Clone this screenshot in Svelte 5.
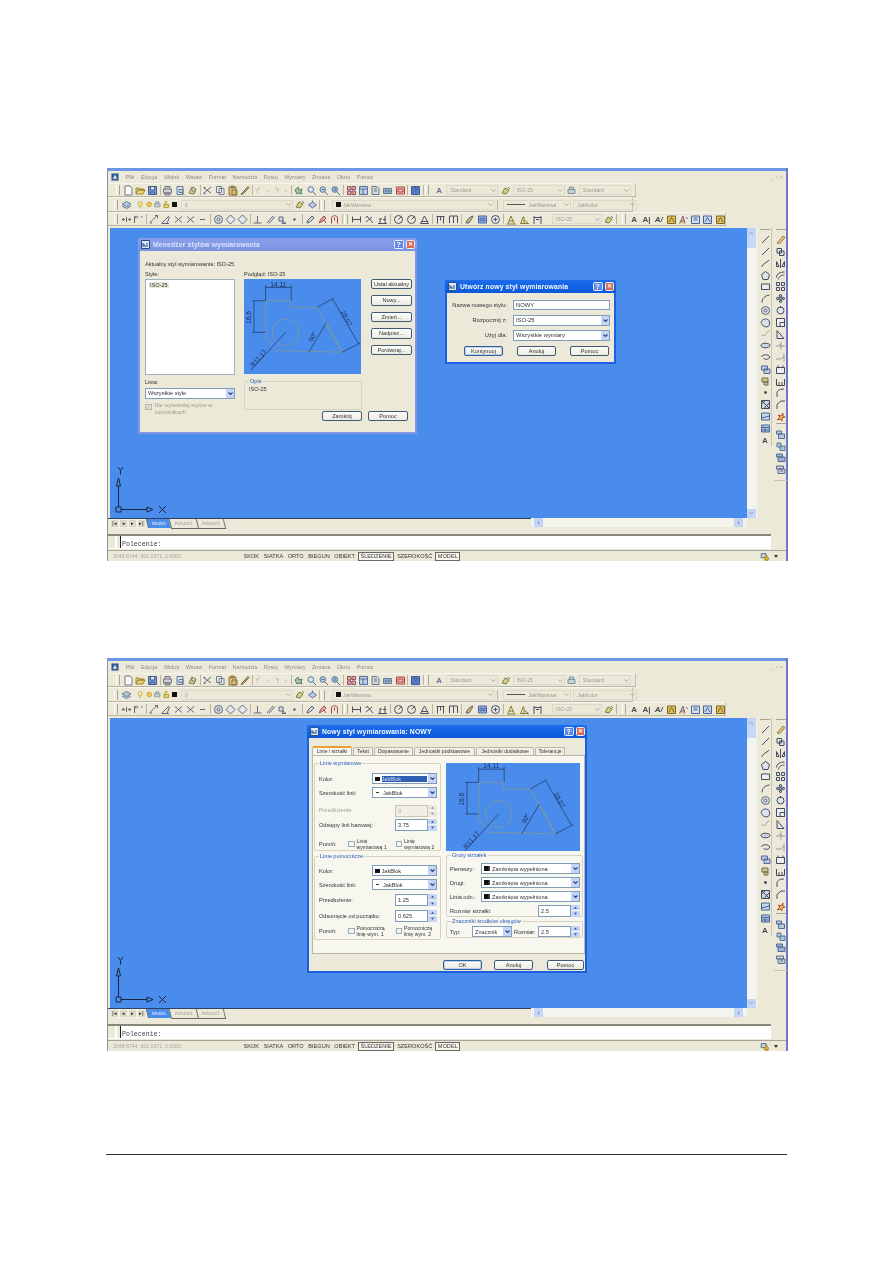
<script>
	// toolbar glyphs on an 11x11 box: [stroke, fill, path]
	const icons = {
		new: ['#55657a', '#fff', 'M2 1h5l2 2v7H2z'],
		open: ['#8a7420', '#f2d060', 'M1 9V3h3l1 1h4v1H3L1 9h7l2-4H3'],
		save: ['#24408c', '#6f8fd8', 'M1.5 1.5h8v8h-8zM3.5 2v3h4V2M3.5 9V7h4v2'],
		print: ['#5a6070', '#c8ccd4', 'M3 4V1.5h5V4M1.5 4h8v4h-8zM3 8h5v2H3z'],
		preview: ['#47608c', '#dfe6f2', 'M2 1.5h6v8H2zM6 6.5l3 3M4 4.5h4v3H4z'],
		plot: ['#6a6240', '#d9cf90', 'M2 8l3-6 4 2-2 5zM5 2v4h3'],
		cut: ['#47506a', 'none', 'M2 8l7-6M2 3l7 5M1.5 8.5h2M1.5 2.5h2'],
		copy: ['#5d6b80', '#eef1f6', 'M1.5 1.5h5v6h-5zM4 3.5h5v6H4z'],
		paste: ['#7a6330', '#e0b860', 'M2 2h7v8H2zM4 1h3v2H4zM5 5h5v5H5z'],
		brush: ['#5a4a30', '#d8a040', 'M9 1.5L5 6 3.5 7.5 2 9.5l2.5-1L6 7l4-4.5z'],
		undo: ['#b8b8ac', 'none', 'M4 9V5c0-2 1.5-3 3.5-3M4 5L2 3.5M4 5l2-1.5'],
		redo: ['#b8b8ac', 'none', 'M7 9V5C7 3 5.5 2 3.5 2M7 5l2-1.5M7 5L5 3.5'],
		dash: ['#b0b0a4', 'none', 'M4 6h3'],
		pan: ['#3e6e50', '#9ac0a0', 'M2 5l3-3 1 3 3-1-1 3 1 2-3-1-2 1z'],
		zoomr: ['#3c5c90', '#d8e4f4', 'M2 4.5a2.8 2.8 0 1 0 5.6 0a2.8 2.8 0 1 0-5.6 0M7 7l3 3'],
		zoomw: ['#3c5c90', '#b8cce8', 'M2 4.5a2.8 2.8 0 1 0 5.6 0a2.8 2.8 0 1 0-5.6 0M7 7l3 3M3.5 4.5h3'],
		zoomp: ['#3c5c90', '#8fb0dc', 'M2 4.5a2.8 2.8 0 1 0 5.6 0a2.8 2.8 0 1 0-5.6 0M7 7l3 3M5 3v3'],
		grid: ['#8a2f70', '#d9b060', 'M1.5 1.5h3.5v3.5H1.5zM6 6h3.5v3.5H6zM6 1.5h3.5v3H6zM1.5 6h3.5v3.5H1.5z'],
		props: ['#3f5c90', '#b8cce4', 'M1.5 1.5h8v8h-8zM1.5 4h8M5 4v5.5'],
		dc: ['#50607a', '#cfd8e4', 'M2 1.5h5l2 2v6H2zM4 4h3M4 6h3'],
		tool: ['#4a6a90', '#9cc0d8', 'M1.5 3.5h8v5h-8zM1.5 6h8M4 3.5v5M7 3.5v5'],
		calc: ['#b02020', '#e8c0c0', 'M1.5 2h8v7h-8zM3 4h5v3H3z'],
		help: ['#24408c', '#3c68c0', 'M1.5 1.5h8v8h-8zM4 4c0-1.5 3-1.5 3 0c0 1-1.5 1-1.5 2.5'],
		layers: ['#54708c', '#b0c4dc', 'M1 5l4.5-2.5L10 5 5.5 7.5zM1 7l4.5 2.5L10 7'],
		bulb: ['#a89010', '#fff080', 'M3 4.5a2.5 2.5 0 1 1 5 0c0 1.5-1 2-1.2 3H4.2C4 6.5 3 6 3 4.5zM4.5 9.5h2'],
		sun: ['#b08810', '#f0c838', 'M2.5 5.5a3 3 0 1 0 6 0a3 3 0 1 0-6 0'],
		print2: ['#6a8090', '#c0d0c8', 'M2 4.5h7v4H2zM3.5 4.5V2h4v2.5'],
		lock: ['#908010', '#e8d040', 'M2.5 5.5h6v4h-6zM4 5.5V3c0-2 3-2 3 0'],
		lprev: ['#5a6a3c', '#e0c860', 'M2 8l3-5 4 2-3 4zM8 2l2 2'],
		lstate: ['#4a5ea0', '#b8c4e8', 'M1.5 6l4-3 4 3-4 3zM5.5 1.5v2'],
		dline: ['#46506a', 'none', 'M1 5.5h3M7 5.5h3M2.5 4l-1 1.5 1 1.5M8.5 4l1 1.5-1 1.5M5.5 3v5'],
		dali: ['#46506a', 'none', 'M1.5 9V3h4M3 4.5l-1.5-1.5L3 1.5M8 2l1.5 1.5'],
		darc: ['#46506a', 'none', 'M1.5 9L5 5.5M2 9h2M5 5.5l4-4M7 1.5h2.5V4'],
		dang: ['#46506a', 'none', 'M1.5 9.5L9 2M7 9.5L9.5 3M2 9.5h7'],
		dx: ['#46506a', 'none', 'M2 2.5l7 6M9 2.5l-7 6'],
		dsm: ['#46506a', 'none', 'M3 5.5h5'],
		circ: ['#46506a', '#d8e0ec', 'M1.5 5.5a4 4 0 1 0 8 0a4 4 0 1 0-8 0M4 5.5a1.5 1.5 0 1 0 3 0a1.5 1.5 0 1 0-3 0'],
		snap: ['#46506a', '#e4e8f0', 'M5.5 1l4.5 4.5-4.5 4.5L1 5.5z'],
		perp: ['#46506a', 'none', 'M1.5 9h8M5.5 9V2'],
		slant: ['#46506a', 'none', 'M2 9l6-7M4 9.5l6-7'],
		box3: ['#46506a', '#d8e0ec', 'M2 3h4v4H2zM6 7l3 2.5H5z'],
		dot: ['#46506a', '#46506a', 'M4.8 4.8h1.4v1.4H4.8z'],
		pen: ['#46506a', '#c8d0dc', 'M2 9l1-3 4-4 2 2-4 4z'],
		red: ['#a03030', '#e0a0a0', 'M2 9l2-4 3-3 2 2-3 3zM7 6l2 3'],
		arch: ['#a02020', 'none', 'M2.5 9.5V4c0-3 6-3 6 0v5.5M5.5 3.5v3'],
		hdim: ['#30364a', 'none', 'M1.5 2.5v6M9.5 2.5v6M1.5 5.5h8'],
		vdim: ['#30364a', 'none', 'M2 8l6-5M3 2l6 7M1.5 4l2-2'],
		odim: ['#30364a', 'none', 'M1 9.5h9M3 9.5V4M8 9.5V2M3 5h2M6 5.5h3'],
		crc: ['#30364a', 'none', 'M1.5 5.5a4 4 0 1 0 8 0a4 4 0 1 0-8 0M5.5 5.5l3-3'],
		tri: ['#30364a', 'none', 'M1.5 9.5h8L5.5 2zM3 7.5h5'],
		hline: ['#30364a', 'none', 'M1.5 2.5h8M2.5 2.5v7M8.5 2.5v7M5.5 2.5v4'],
		mdim: ['#30364a', 'none', 'M1.5 2h8M1.5 2v7M5.5 2v7M9.5 2v7'],
		tol: ['#3c4a70', '#d4b040', 'M2 9c1-4 4-6 7-7-1 3-3 5-4 7z'],
		b20: ['#284ca0', '#9cb8e4', 'M1.5 2h8v7h-8zM3 4h2v3H3zM6 4h2v3H6z'],
		dcen: ['#30364a', '#e8ecf2', 'M1.5 5.5a4 4 0 1 0 8 0a4 4 0 1 0-8 0M3.5 5.5h4M5.5 3.5v4'],
		dtxt: ['#7a6a10', 'none', 'M2 9.5L5 2l3 7.5M3 7h5M1 10h9'],
		dstyle: ['#7a6a10', 'none', 'M2 9l2-6h1v6M5 6l4 3M1 9.5h9'],
		dupd: ['#30364a', 'none', 'M2 2v8M9 2v8M2 3.5h7M4 5.5h3'],
		line: ['#28304a', 'none', 'M2 9l7-7'],
		spl: ['#28304a', 'none', 'M2 9c0-3 2-2 3-4 1-1 3-1 4-3'],
		hex: ['#28304a', '#dde4ee', 'M5.5 1.5l4 3-1.5 5H3l-1.5-5z'],
		rect: ['#28304a', '#eef1f6', 'M1.5 3h8v5.5h-8z'],
		arc: ['#28304a', 'none', 'M2 9.5c0-4 3-7 7.5-7.5'],
		cloud: ['#28304a', '#d8dff0', 'M2 3.5c2-2 5-2 7 0 1 2 1 5-1 6-2 1-5 0-6-2-1-1-1-3 0-4z'],
		wave: ['#8a8f90', 'none', 'M1.5 7c2-3 3 1 4-1s2-4 4-4'],
		ell: ['#28304a', '#c8d2e2', 'M1 5.5c0-3 9-3 9 0s-9 3-9 0z'],
		ell2: ['#28304a', 'none', 'M1.5 5c0-3 8-3 8 0s-5 2.5-6 1.5'],
		block: ['#345090', '#b8c8e0', 'M1.5 2h6v4h-6zM4 5h6v4.5H4z'],
		ins: ['#5a5a38', '#c8c080', 'M2 2h6v4H2zM4 6h4v3H4z'],
		point: ['#28304a', '#28304a', 'M4.7 4.7h1.6v1.6H4.7z'],
		hatch: ['#28304a', '#c8d2e2', 'M1.5 1.5h8v8h-8zM1.5 5l4-3.5M4 9.5l5.5-6M1.5 1.5l8 8'],
		grad: ['#2c508c', '#c0d4e8', 'M1.5 2h8v7h-8zM1.5 7l8-2'],
		table: ['#2c508c', '#a8c4e4', 'M1.5 2h8v7h-8zM1.5 4.5h8M1.5 7h8M5 4.5V9'],
		erase: ['#8a7040', '#e0c060', 'M2 9l6-7 2 1.5L5 9.5z'],
		cpy2: ['#28304a', '#e4e8f0', 'M2 2.5h4.5v4.5H2zM4.5 5h4.5v4.5H4.5z'],
		mir: ['#28304a', 'none', 'M5.5 1v9M1.5 8.5V3.5L4 8.5zM9.5 8.5V3.5L7 8.5z'],
		off: ['#28304a', 'none', 'M1.5 7.5c0-4 4-5.5 8-5.5M3.5 9.5c0-3 3-4.5 6-4.5'],
		arr: ['#28304a', '#e4e8f0', 'M1.5 1.5h3v3h-3zM6.5 1.5h3v3h-3zM1.5 6.5h3v3h-3zM6.5 6.5h3v3h-3z'],
		move: ['#28304a', '#b8c8dc', 'M5.5 1l1.5 2H6v2h2V4l2 1.5L8 7V6H6v2h1L5.5 10 4 8h1V6H3v1L1 5.5 3 4v1h2V3H4z'],
		rot: ['#28304a', '#dde4ee', 'M2 5.5a3.5 3.5 0 1 0 7 0a3.5 3.5 0 1 0-7 0M5.5 1v2'],
		scale: ['#28304a', '#eef1f6', 'M1.5 1.5h8v8h-8zM5 5.5h4.5v4H5z'],
		stretch: ['#28304a', '#dde4ee', 'M2 9.5V1.5l7 8z'],
		trim: ['#8a8f90', 'none', 'M1 6h9M6 1.5v8M4 4l2 2'],
		ext: ['#8a8f90', 'none', 'M1 7h5l3-3M9 1.5v8'],
		brk: ['#28304a', '#eef1f6', 'M1.5 3.5h8v6h-8zM3 3.5v-2M8 3.5v-2'],
		brk2: ['#28304a', 'none', 'M1.5 3v6.5h8V3M4 9.5V6M7 9.5V6'],
		fil: ['#28304a', 'none', 'M2 10V6c0-2 2-4 7-4'],
		cham: ['#28304a', 'none', 'M2 10V5.5L6 2h4'],
		expl: ['#b03020', '#e8c030', 'M2 9l3-3-2-2 3 1 2-3 0 3 2 1-3 1 0 3-2-2z'],
		d1: ['#3a5890', '#b0c4dc', 'M1.5 2h5v3h-5zM3.5 5h6v4.5h-6z'],
		d2: ['#3a6890', '#a0c0dc', 'M2 2h4v4H2zM5 5h5v4.5H5z'],
		d3: ['#3a5890', '#8ea8cc', 'M1.5 2h6v3h-6zM3 5h7v4.5H3z'],
		d4: ['#46587a', '#c0ccdc', 'M1.5 2h7v3h-7zM3 5h7v4.5H3zM5 7h3'],
		astyle: ['#6a4c90', '#e0c060', 'M1.5 9.5L5 2l2 7.5M3 7h4M8 3l2 2'],
		ab: ['#2a4a90', '#c8d8f0', 'M1.5 2h8v7.5h-8zM3 8l2.5-4.5L8 8'],
		ab2: ['#2a4a90', '#d8e4f4', 'M1.5 2h8v7.5h-8zM3.5 4h4M3.5 6h4'],
		afind: ['#6a5010', '#dcb840', 'M1.5 2h8v7.5h-8zM3 8l2.5-4.5L8 8']
	};

	const letters = { A: 'A', AI: 'A|', AN: 'A/' };
	const narrow = ['undo', 'redo', 'dash'];

	const left = ['line', 'line', 'spl', 'hex', 'rect', 'arc', 'circ', 'cloud', 'wave', 'ell', 'ell2', 'block', 'ins', 'point', 'hatch', 'grad', 'table', 'A'];
	const right = ['erase', 'cpy2', 'mir', 'off', 'arr', 'move', 'rot', 'scale', 'stretch', 'trim', 'ext', 'brk', 'brk2', 'fil', 'cham', 'expl'];
	const draw = ['d1', 'd2', 'd3', 'd4'];

	const row1 = ['new', 'open', 'save', '|', 'print', 'preview', 'plot', '|', 'cut', 'copy', 'paste', 'brush', '|', 'undo', 'dash', 'redo', 'dash', '|', 'pan', 'zoomr', 'zoomw', 'zoomp', '|', 'grid', 'props', 'dc', 'tool', 'calc', '|', 'help'];
	const row3a = ['dline', 'dali', '|', 'darc', 'dang', 'dx', 'dx', 'dsm', '|', 'circ', 'snap', 'snap', '|', 'perp', 'slant', 'box3', 'dot', '|', 'pen', 'red', 'arch'];
	const row3b = ['hdim', 'vdim', 'odim', '|', 'crc', 'crc', 'tri', '|', 'hline', 'mdim', '|', 'tol', 'b20', 'dcen', '|', 'dtxt', 'dstyle', 'dupd'];
	const row3c = ['A', 'AI', 'AN', 'afind', 'astyle', 'ab2', 'ab', 'afind'];

	const tabs3 = ['Linie i strzałki', 'Tekst', 'Dopasowanie', 'Jednostki podstawowe', 'Jednostki dodatkowe', 'Tolerancje'];
	const menu = ['Plik', 'Edycja', 'Widok', 'Wstaw', 'Format', 'Narzędzia', 'Rysuj', 'Wymiary', 'Zmiana', 'Okno', 'Pomoc'];
	const status = ['SKOK', 'SIATKA', 'ORTO', 'BIEGUN', 'OBIEKT', 'ŚLEDZENIE', 'SZEROKOŚĆ', 'MODEL'];
</script>

{#snippet ic(name)}
	{#if name === '|'}
		<i class="sep"></i>
	{:else if letters[name]}
		<b class="tool ltr" class:ital={name === 'AN'}>{letters[name]}</b>
	{:else}
		<svg class="tool" class:nar={narrow.includes(name)} viewBox="0 0 11 11" width="11" height="11">
			<path d={icons[name][2]} stroke={icons[name][0]} fill={icons[name][1]} stroke-width="1" />
		</svg>
	{/if}
{/snippet}

{#snippet combo(text, cls, swatch = false, lineMark = false)}
	<span class="combo {cls}">
		{#if swatch}<i class="blk"></i>{/if}
		{#if lineMark}<i class="lmark"></i>{/if}
		<span class="ctext">{text}</span>
		<svg class="cv" viewBox="0 0 7 7" width="7" height="7"><path d="M1.5 2.5l2 2 2-2" fill="none" stroke="#a8a89c" /></svg>
	</span>
{/snippet}

{#snippet sel(text, cls = '', swatch = '')}
	<span class="sel {cls}">
		{#if swatch === 'b'}<i class="blk"></i>{/if}
		{#if swatch === 'l'}<i class="lmark2"></i>{/if}
		{#if swatch === 'a'}<i class="arrow"></i>{/if}
		<span class="stext" class:picked={cls.includes('picked')}>{text}</span>
		<span class="sbtn"><svg viewBox="0 0 7 7" width="7" height="7"><path d="M1.5 2.5l2 2 2-2" fill="none" stroke="#2a4a90" stroke-width="1.2" /></svg></span>
	</span>
{/snippet}

{#snippet spin(text, cls = '')}
	<span class="spin {cls}">
		<span class="sval">{text}</span>
		<span class="sarr">
			<svg viewBox="0 0 9 5" preserveAspectRatio="none"><path d="M3 3.500l1.500-2 1.500 2z" fill="#2a4a90" /></svg>
			<svg viewBox="0 0 9 5" preserveAspectRatio="none"><path d="M3 1.500l1.500 2 1.500-2z" fill="#2a4a90" /></svg>
		</span>
	</span>
{/snippet}

{#snippet preview(vb, cls)}
	<svg class="preview {cls}" viewBox={vb}>
		<g fill="none" stroke="#8f9a80" stroke-width="2">
			<path d="M65 65h75v20h80l75 135-200-5-30-40z" />
			<circle cx="125" cy="160" r="40" />
			<path d="M248 130l47 90" />
		</g>
		<g fill="none" stroke="#1c2f58" stroke-width="2">
			<path d="M65 65V18M142 65V18M65 25h77" />
			<path d="M25 65h40M25 160h40M30 65v95" />
			<path d="M220 85l50-28M295 220l55-28M267 60l78 135" />
			<path d="M195 220l53-90M125 160L20 275" />
		</g>
		<g fill="#1c2f58" font-family="'Liberation Sans', sans-serif" font-size="20">
			<text x="79" y="23">14,11</text>
			<text transform="translate(20 135) rotate(-90)">16,6</text>
			<text transform="translate(290 100) rotate(60)">28,07</text>
			<text transform="translate(205 190) rotate(-60)">60°</text>
			<text transform="translate(28 266) rotate(-48)">R11,17</text>
		</g>
	</svg>
{/snippet}

{#snippet title(text, active)}
	<div class="title" class:active>
		<svg class="ticon" viewBox="0 0 9 9" width="9" height="9"><path d="M.5.5h8v8h-8z" fill="#dfe8f4" stroke="#24508c" /><path d="M2 7V3M2 5h2v2M6 3v4" stroke="#24508c" fill="none" /></svg>
		<span class="ttext">{text}</span>
		<span class="tb help">?</span>
		<span class="tb close">✕</span>
	</div>
{/snippet}

{#snippet managerDialog()}
	<div class="dlg inactive d1">
		{@render title('Menedżer stylów wymiarowania', false)}
		<div class="d1-body">
			<div class="d1-top">Aktualny styl wymiarowania: ISO-25</div>
			<div class="d1-grid">
				<div class="d1-col">
					<span class="lbl">Style:</span>
					<div class="listbox"><span class="item">ISO-25</span></div>
					<span class="lbl lista">Lista:</span>
					{@render sel('Wszystkie style', 'd1-sel')}
					<div class="chk-row">
						<i class="chk on"></i>
						<span class="dim">Nie wyświetlaj stylów w odnośnikach</span>
					</div>
				</div>
				<div class="d1-col mid">
					<span class="lbl">Podgląd: ISO-25</span>
					{@render preview('0 0 352 285', 'p1')}
					<div class="group opis"><span class="legend">Opis</span><span class="lbl">ISO-25</span></div>
				</div>
				<div class="d1-btns">
					<span class="btn w41">Ustal aktualny</span>
					<span class="btn w41">Nowy...</span>
					<span class="btn w41">Zmień...</span>
					<span class="btn w41">Nadpisz...</span>
					<span class="btn w41">Porównaj...</span>
				</div>
			</div>
			<div class="d1-foot">
				<span class="btn w40">Zamknij</span>
				<span class="btn w40">Pomoc</span>
			</div>
		</div>
	</div>
{/snippet}

{#snippet newDialog()}
	<div class="dlg d2">
		{@render title('Utwórz nowy styl wymiarowania', true)}
		<div class="d2-body">
			<div class="d2-row"><span class="rlbl">Nazwa nowego stylu:</span><span class="txt">NOWY</span></div>
			<div class="d2-row"><span class="rlbl">Rozpocznij z:</span>{@render sel('ISO-25', 'd2-sel')}</div>
			<div class="d2-row"><span class="rlbl">Użyj dla:</span>{@render sel('Wszystkie wymiary', 'd2-sel')}</div>
			<div class="d2-btns">
				<span class="btn w39 def">Kontynuuj</span>
				<span class="btn w39">Anuluj</span>
				<span class="btn w39">Pomoc</span>
			</div>
		</div>
	</div>
{/snippet}

{#snippet styleDialog()}
	<div class="dlg d3">
		{@render title('Nowy styl wymiarowania: NOWY', true)}
		<div class="d3-body">
			<div class="tabs">
				{#each tabs3 as t, i}
					<span class="tab t{i}" class:on={i === 0}>{t}</span>
				{/each}
			</div>
			<div class="panel">
				<div class="pcol">
					<div class="group g1">
						<span class="legend">Linie wymiarowe</span>
						<div class="frow"><span class="flbl">Kolor:</span>{@render sel('JakBlok', 'fsel picked', 'b')}</div>
						<div class="frow"><span class="flbl">Szerokość linii:</span>{@render sel('JakBlok', 'fsel', 'l')}</div>
						<div class="frow mt"><span class="flbl dim">Przedłużenie:</span>{@render spin('0', 'off')}</div>
						<div class="frow"><span class="flbl">Odstępy linii bazowej:</span>{@render spin('3.75')}</div>
						<div class="frow mt tall">
							<span class="omit">Pomiń:</span>
							<i class="chk"></i><span class="clbl">Linię wymiarową 1</span>
							<i class="chk"></i><span class="clbl">Linię wymiarową 2</span>
						</div>
					</div>
					<div class="group g2">
						<span class="legend">Linie pomocnicze</span>
						<div class="frow"><span class="flbl">Kolor:</span>{@render sel('JakBlok', 'fsel', 'b')}</div>
						<div class="frow"><span class="flbl">Szerokość linii:</span>{@render sel('JakBlok', 'fsel', 'l')}</div>
						<div class="frow mt1"><span class="flbl">Przedłużenie:</span>{@render spin('1.25')}</div>
						<div class="frow mt1"><span class="flbl">Odsunięcie od początku:</span>{@render spin('0.625')}</div>
						<div class="frow tall">
							<span class="omit">Pomiń:</span>
							<i class="chk"></i><span class="clbl">Pomocniczą linię wym. 1</span>
							<i class="chk"></i><span class="clbl">Pomocniczą linię wym. 2</span>
						</div>
					</div>
				</div>
				<div class="pcol">
					{@render preview('-33 7 403 264', 'p3')}
					<div class="group g3">
						<span class="legend">Groty strzałek</span>
						<div class="frow"><span class="flbl">Pierwszy:</span>{@render sel('Zamknięta wypełniona', 'asel', 'a')}</div>
						<div class="frow"><span class="flbl">Drugi:</span>{@render sel('Zamknięta wypełniona', 'asel', 'a')}</div>
						<div class="frow"><span class="flbl">Linia odn.:</span>{@render sel('Zamknięta wypełniona', 'asel', 'a')}</div>
						<div class="frow"><span class="flbl">Rozmiar strzałki:</span>{@render spin('2.5')}</div>
					</div>
					<div class="group g4">
						<span class="legend">Znaczniki środków okręgów</span>
						<div class="frow">
							<span class="typ">Typ:</span>
							{@render sel('Znacznik', 'tsel')}
							<span class="roz">Rozmiar:</span>
							{@render spin('2.5')}
						</div>
					</div>
				</div>
			</div>
			<div class="d3-foot">
				<span class="btn w39 def">OK</span>
				<span class="btn w39">Anuluj</span>
				<span class="btn w37">Pomoc</span>
			</div>
		</div>
	</div>
{/snippet}

{#snippet cad(dialogs)}
	<section class="cad">
		<div class="bluebar"></div>
		<div class="menubar">
			<svg class="ticon" viewBox="0 0 9 9" width="8" height="8"><path d="M.5.5h8v8h-8z" fill="#2c5a94" /><path d="M2 6.5L4.5 2 7 6.5z" fill="#dfe8f4" /></svg>
			{#each menu as m}<span>{m}</span>{/each}
			<span class="winbtns">_ ▫ ×</span>
		</div>
		<div class="tbrow r1">
			<i class="grip"></i>
			{#each row1 as n}{@render ic(n)}{/each}
			<i class="sep"></i><i class="grip"></i>
			<b class="tool ltr sm">A</b>
			{@render combo('Standard', 'w52')}
			{@render ic('lprev')}
			{@render combo('ISO-25', 'w52')}
			{@render ic('print2')}
			{@render combo('Standard', 'w52')}
		</div>
		<div class="tbrow r2">
			<i class="grip"></i>
			{@render ic('layers')}
			<span class="lay"></span>
			<span class="tight">{@render ic('bulb')}{@render ic('sun')}{@render ic('print2')}{@render ic('lock')}</span>
			<i class="blk big"></i>
			{@render combo('0', 'w112')}
			{@render ic('lprev')}{@render ic('lstate')}
			<i class="sep"></i><i class="grip"></i>
			{@render combo('JakWarstwa', 'w163', true)}
			<i class="sep"></i>
			{@render combo('JakWarstwa', 'w68', false, true)}
			{@render combo('JakKolor', 'w64')}
		</div>
		<div class="tbrow r3">
			<i class="grip"></i>
			{#each row3a as n}{@render ic(n)}{/each}
			<i class="sep"></i><i class="grip"></i>
			<span class="wide">{#each row3b as n}{@render ic(n)}{/each}</span>
			{@render combo('ISO-25', 'w50')}
			{@render ic('lprev')}
			<i class="sep"></i><i class="grip gap"></i>
			{#each row3c as n}{@render ic(n)}{/each}
		</div>
		<div class="work">
			<div class="canvas">
				{@render dialogs()}
				<svg class="ucs" viewBox="0 0 60 50" width="60" height="50">
					<g fill="none" stroke="#1a2440" stroke-width="1">
						<path d="M8 1l2.5 3.5v4M13 1l-2.500 3.500" />
						<path d="M8.500 12l-2 8h4zM8.500 20v21" />
						<path d="M6 41h5v5H6zM11 43.500h26M37 41v5l6-2.500z" />
						<path d="M49 40l7 7M56 40l-7 7" />
					</g>
				</svg>
			</div>
			<div class="vscroll">
				<span class="sb">︿</span><span class="thumb"></span><span class="track"></span><span class="sb">﹀</span>
			</div>
			<div class="vtool c1">
				<i class="hgrip"></i>
				{#each left as n}{@render ic(n)}{/each}
			</div>
			<div class="vtool c2">
				<i class="hgrip"></i>
				{#each right as n}{@render ic(n)}{/each}
				<i class="hgrip"></i>
				{#each draw as n}{@render ic(n)}{/each}
			</div>
		</div>
		<div class="tabbar">
			<div class="navs"><span>|◂</span><span>◂</span><span>▸</span><span>▸|</span></div>
			<span class="stab on">Model</span>
			<span class="stab">Arkusz1</span>
			<span class="stab">Arkusz2</span>
			<div class="hscroll"><span class="sb">‹</span><span class="track"></span><span class="sb">›</span></div>
		</div>
		<div class="cmd"><i class="cgrip"></i><span>Polecenie:</span></div>
		<div class="statusbar">
			<span class="coords">2048.6744, 931.0371, 0.0000</span>
			{#each status as s}
				<span class="stat" class:press={s === 'ŚLEDZENIE' || s === 'MODEL'}>{s}</span>
			{/each}
			<span class="tray">
				<svg viewBox="0 0 11 11" width="9" height="9"><path d="M1.500 2h6v5h-6z" fill="#c8d0dc" stroke="#4a5a70" /><path d="M6 7l2-3 2 3v3H6z" fill="#e8c030" stroke="#8a7010" /></svg>
				<span class="tri-d"></span>
			</span>
		</div>
	</section>
{/snippet}

{#snippet first()}
	{@render managerDialog()}
	{@render newDialog()}
{/snippet}
{#snippet second()}
	{@render styleDialog()}
{/snippet}

<main class="page">
	{@render cad(first)}
	{@render cad(second)}
	<hr class="rule" />
</main>

<style>
	:global(body) {
		background: #fff;
	}

	.page {
		width: 893px;
		height: 1263px;
		padding: 168px 0 0 107px;
		box-sizing: border-box;
		overflow: hidden;
		font-family: 'Liberation Sans', Arial, sans-serif;
	}

	.rule {
		width: 681px;
		margin: 103px 0 0 -1px;
		border: 0;
		border-top: 1px solid #333;
	}

	.cad {
		width: 681px;
		height: 393px;
		margin-bottom: 97px;
		display: flex;
		flex-direction: column;
		background: #ece9d8;
		border-right: 2px solid #6f78c4;
		border-left: 1px solid #8f93a8;
		box-sizing: border-box;
		filter: blur(0.45px);
		font-size: 5.6px;
		color: #222;
	}

	.bluebar {
		height: 3px;
		background: #6d95e8;
	}

	.menubar {
		height: 12px;
		display: flex;
		align-items: center;
		gap: 6.5px;
		padding-left: 3px;
		color: #8c8c80;
		font-size: 5.5px;
		background: #ece9d8;
	}

	.winbtns {
		margin-left: auto;
		margin-right: 3px;
		color: #b5b5aa;
		font-size: 6px;
	}

	.tbrow {
		height: 14.5px;
		display: flex;
		align-items: center;
		padding-left: 6px;
		box-sizing: border-box;
		border-bottom: 1px solid #b8b5a2;
		border-right: 1px solid #c4c1ae;
		border-top: 1px solid #f7f6ee;
	}

	.r1 {
		width: 528px;
		padding-left: 8px;
	}

	.r2 {
		width: 525px;
	}

	.r3 {
		width: 618px;
	}

	.grip {
		width: 2px;
		height: 10px;
		border-left: 1px solid #fff;
		border-right: 1px solid #a8a594;
		margin-right: 2px;
		flex: none;
	}

	.gap {
		margin-left: 4px;
	}

	.sep {
		width: 1px;
		height: 10px;
		background: #b8b5a2;
		margin: 0 1px;
		flex: none;
	}

	.tool {
		flex: none;
		width: 11px;
		height: 11px;
		margin: 0 0.65px;
		opacity: 0.85;
	}

	.nar {
		width: 9px;
		margin: 0;
	}

	.wide,
	.tight {
		display: flex;
		align-items: center;
		flex: none;
	}

	.wide {
		margin-right: 7px;
	}

	.wide .tool {
		margin: 0 1px;
	}

	.tight .tool {
		width: 8.5px;
		margin: 0;
	}

	.ltr {
		display: block;
		text-align: center;
		line-height: 11px;
		font-size: 8px;
		color: #2b2f3a;
		white-space: nowrap;
	}

	.ital {
		font-style: italic;
	}

	.sm {
		color: #6a4c90;
		margin-left: 3px;
	}

	.lay {
		width: 4px;
		flex: none;
	}

	.combo {
		height: 10px;
		display: flex;
		align-items: center;
		flex: none;
		box-sizing: border-box;
		padding-left: 3px;
		margin: 0 1px;
		color: #9c9c90;
		font-size: 5.2px;
		border: 1px solid #dcd9c8;
	}

	.ctext {
		flex: 1;
		white-space: nowrap;
		overflow: hidden;
	}

	.cv {
		flex: none;
	}

	.w52 {
		width: 52px;
	}

	.w112 {
		width: 112px;
	}

	.w163 {
		width: 163px;
		margin-left: 5px;
	}

	.w68 {
		width: 68px;
		margin-left: 4px;
	}

	.w64 {
		width: 64px;
	}

	.w50 {
		width: 50px;
	}

	.blk {
		width: 4.5px;
		height: 4.5px;
		background: #111;
		flex: none;
		margin-right: 2px;
	}

	.big {
		margin-left: 2px;
		margin-right: 3px;
	}

	.lmark {
		width: 18px;
		height: 1px;
		background: #555;
		margin-right: 3px;
		flex: none;
	}

	.work {
		height: 291px;
		margin-top: 1.5px;
		display: flex;
		align-items: stretch;
		padding-left: 2px;
	}

	.canvas {
		width: 637px;
		flex: none;
		position: relative;
		background: #4a8ceb;
	}

	.ucs {
		position: absolute;
		left: 0;
		top: 238px;
	}

	.vscroll {
		width: 10px;
		flex: none;
		background: #f4f4ee;
		display: flex;
		flex-direction: column;
	}

	.vscroll .sb,
	.hscroll .sb {
		display: block;
		background: #c4d4f5;
		color: #23408a;
		font-size: 5px;
		line-height: 9px;
		width: 9px;
		height: 9px;
		text-align: center;
		flex: none;
		overflow: hidden;
	}

	.thumb {
		width: 9px;
		height: 11px;
		background: #c8d8f6;
		flex: none;
	}

	.track {
		flex: 1;
	}

	.vtool {
		display: flex;
		flex-direction: column;
		align-items: center;
		flex: none;
	}

	.vtool .tool {
		margin: 0.4px 0;
	}

	.c1 {
		width: 12px;
		margin-left: 2px;
		border-right: 1px solid #c8c5b2;
		height: 218px;
	}

	.c2 {
		width: 13px;
		margin-left: 2px;
		height: 252px;
		border-bottom: 1px solid #c8c5b2;
	}

	.hgrip {
		width: 10px;
		height: 3px;
		margin: 1px 0;
		border-top: 1px solid #a8a594;
		flex: none;
	}

	.tabbar {
		height: 12px;
		display: flex;
		align-items: flex-start;
		padding-left: 2px;
		font-size: 5px;
		border-top: 1px solid #304060;
		width: 425px;
		position: relative;
		color: #999;
	}

	.navs {
		display: flex;
		margin-right: 1px;
	}

	.navs span {
		width: 9px;
		height: 9px;
		background: #dbd8c6;
		border: 1px solid #f2f1e6;
		box-sizing: border-box;
		color: #222;
		font-size: 5px;
		line-height: 7px;
		text-align: center;
	}

	.stab {
		height: 9px;
		line-height: 9px;
		padding: 0 4px;
		border-left: 1px solid #777;
		border-right: 1px solid #777;
		transform: skewX(14deg);
		margin-right: -1px;
		background: #ece9d8;
		border-bottom: 1px solid #666;
	}

	.stab.on {
		background: #4a8ceb;
		color: #e8f0ff;
		border-bottom: 0;
	}

	.hscroll {
		position: absolute;
		left: 423px;
		width: 216px;
		top: -1px;
		height: 9px;
		background: #f4f4ee;
		display: flex;
		justify-content: space-between;
		padding: 0 4px 0 3px;
		box-sizing: border-box;
	}

	.cmd {
		height: 15px;
		margin-top: 3px;
		display: flex;
		align-items: flex-end;
		background: #fff;
		width: 663px;
		border-top: 2px solid #87877a;
		box-sizing: border-box;
		padding-bottom: 1px;
		font-family: 'Liberation Mono', monospace;
		font-size: 6.6px;
		color: #444;
	}

	.cgrip {
		width: 3px;
		background: #ece9d8;
		border-right: 1px solid #222;
		margin: 0 1px 0 9px;
		box-shadow: -6px 0 0 #ece9d8, -9px 0 0 #ece9d8;
		align-self: stretch;
	}

	.statusbar {
		height: 11px;
		margin-top: 1px;
		display: flex;
		align-items: center;
		padding-left: 2px;
		border-top: 1px solid #a8a594;
		box-sizing: border-box;
		font-size: 5.6px;
	}

	.coords {
		width: 132px;
		flex: none;
		color: #a8a89c;
		padding-left: 3px;
		box-sizing: border-box;
		font-size: 5.2px;
	}

	.stat {
		height: 9px;
		line-height: 9px;
		padding: 0 1.5px;
		margin-right: 1.6px;
		color: #3a3a34;
		white-space: nowrap;
	}

	.press {
		background: #f6f5ee;
		border: 1px solid #666;
		box-sizing: border-box;
		line-height: 7px;
	}

	.tray {
		margin-left: auto;
		display: flex;
		align-items: center;
		gap: 5px;
		margin-right: 8px;
	}

	.tri-d {
		border: 2px solid transparent;
		border-top: 3px solid #333;
		margin-top: 3px;
	}

	/* dialogs float on the drawing area */
	.dlg {
		position: absolute;
		background: #ece9d8;
		border: 2px solid #1c5fe0;
		border-top: 0;
		border-radius: 3px 3px 0 0;
		box-sizing: border-box;
		display: flex;
		flex-direction: column;
		color: #333;
	}

	.inactive {
		border-color: #8297e0;
	}

	.d1 {
		left: 28px;
		top: 10px;
		width: 279px;
		height: 196px;
	}

	.d2 {
		left: 335px;
		top: 52px;
		width: 171px;
		height: 84px;
	}

	.d3 {
		left: 197px;
		top: 7px;
		width: 280px;
		height: 248px;
	}

	.title {
		height: 13px;
		margin: 0 -2px;
		display: flex;
		align-items: center;
		padding: 0 2px 0 3px;
		gap: 3px;
		background: linear-gradient(#8aa0ea, #7a93e2);
		border-radius: 3px 3px 0 0;
		color: #dbe3fa;
		font-size: 6.8px;
		font-weight: bold;
		letter-spacing: 0.15px;
		flex: none;
	}

	.title.active {
		background: linear-gradient(#1c6cec, #0c58dc);
		color: #f4f8ff;
	}

	.ticon {
		flex: none;
	}

	.ttext {
		flex: 1;
		white-space: nowrap;
	}

	.tb {
		width: 9.5px;
		height: 9.5px;
		flex: none;
		border: 1px solid #e8eefc;
		border-radius: 1.5px;
		box-sizing: border-box;
		color: #fff;
		font-size: 7px;
		line-height: 7.5px;
		text-align: center;
		margin-left: -1px;
	}

	.help {
		background: #5f8ae8;
	}

	.close {
		background: #d86a50;
		font-size: 6px;
	}

	.lbl {
		display: block;
		line-height: 8px;
		white-space: nowrap;
	}

	.d1-body {
		flex: 1;
		padding: 9px 5px 0 5px;
		display: flex;
		flex-direction: column;
	}

	.d1-top {
		height: 10px;
		line-height: 8px;
	}

	.d1-grid {
		display: grid;
		grid-template-columns: 90px 118px 42px;
		column-gap: 9px;
		height: 137px;
	}

	.d1-col {
		display: flex;
		flex-direction: column;
	}

	.listbox {
		height: 96px;
		background: #fff;
		border: 1px solid #a0b0c0;
		box-sizing: border-box;
		padding: 2px 3px;
		margin-top: 1px;
	}

	.item {
		background: #ece9d8;
		padding: 0 1px;
	}

	.lista {
		margin-top: 3px;
		margin-bottom: 2px;
	}

	.sel {
		display: flex;
		align-items: center;
		height: 11px;
		background: #fff;
		border: 1px solid #7f9db9;
		box-sizing: border-box;
		padding-left: 2px;
		flex: none;
		white-space: nowrap;
		overflow: hidden;
	}

	.stext {
		flex: 1;
		overflow: hidden;
	}

	.stext.picked {
		background: #2f5fb4;
		color: #cfdcf5;
		margin-right: 1px;
	}

	.sbtn {
		width: 8px;
		height: 9px;
		background: #c6d5f6;
		display: flex;
		align-items: center;
		justify-content: center;
		flex: none;
	}

	.chk-row {
		display: flex;
		gap: 3px;
		margin-top: 3px;
	}

	.chk {
		width: 6.5px;
		height: 6.5px;
		border: 1px solid #9aaabb;
		background: #f6f6f0;
		flex: none;
		box-sizing: border-box;
		margin-top: 2px;
	}

	.chk-row .chk.on {
		background: #e6e4d6;
		border-color: #b8b6a6;
		color: #a09e90;
		font-size: 5px;
		line-height: 4.5px;
		font-style: normal;
		text-align: center;
	}

	.chk-row .chk.on::after {
		content: '✓';
	}

	.dim {
		color: #a09e90;
		line-height: 7px;
	}

	.mid .lbl:first-child {
		height: 8px;
	}

	.preview {
		display: block;
		background: #4a8ceb;
		flex: none;
	}

	.p1 {
		width: 117px;
		height: 95px;
		margin-top: 1px;
	}

	.p3 {
		width: 134px;
		height: 88px;
	}

	.group {
		position: relative;
		border: 1px solid #d6d3c2;
		border-radius: 2px;
		box-sizing: border-box;
	}

	.legend {
		position: absolute;
		top: -4px;
		left: 4px;
		background: inherit;
		padding: 0 1px;
		color: #2a5cb8;
		line-height: 7px;
		white-space: nowrap;
	}

	.opis {
		height: 29px;
		margin-top: 7px;
		padding: 3px 4px;
		background: #ece9d8;
	}

	.d1-btns {
		display: flex;
		flex-direction: column;
		gap: 6px;
		padding-top: 9px;
	}

	.btn {
		display: block;
		height: 10.5px;
		line-height: 8.5px;
		text-align: center;
		border: 1px solid #3e5a74;
		border-radius: 2px;
		box-sizing: border-box;
		background: linear-gradient(#fdfdfa, #ecebe1);
		color: #333;
		white-space: nowrap;
		flex: none;
	}

	.def {
		border-color: #2f5f9c;
		box-shadow: inset 0 0 0 1px #bccdf0;
	}

	.w41 {
		width: 41px;
	}

	.w40 {
		width: 40px;
	}

	.w39 {
		width: 39px;
	}

	.w37 {
		width: 37px;
		margin-left: 2px;
	}

	.d1-foot {
		display: flex;
		justify-content: flex-end;
		gap: 6px;
		padding-right: 2px;
		margin-top: 4px;
	}

	.d2-body {
		flex: 1;
		padding: 7px 4px 0 0;
		display: flex;
		flex-direction: column;
		gap: 4.5px;
	}

	.d2-row {
		display: flex;
		align-items: center;
		height: 10.5px;
		font-size: 5.8px;
	}

	.rlbl {
		width: 60px;
		text-align: right;
		margin-right: 6px;
		white-space: nowrap;
		flex: none;
	}

	.txt {
		flex: 1;
		height: 10.5px;
		line-height: 8.5px;
		background: #fff;
		border: 1px solid #7f9db9;
		box-sizing: border-box;
		padding-left: 2px;
	}

	.d2-btns {
		display: flex;
		gap: 14px;
		padding-left: 17px;
		margin-top: 1px;
	}

	.d3-body {
		flex: 1;
		padding: 8px 0 0 3px;
		display: flex;
		flex-direction: column;
		min-height: 0;
	}

	.tabs {
		display: flex;
		height: 9px;
		gap: 1px;
		align-items: flex-end;
		position: relative;
		z-index: 1;
	}

	.tab {
		height: 8px;
		line-height: 7px;
		text-align: center;
		border: 1px solid #b9b7a6;
		border-bottom: 0;
		border-radius: 2px 2px 0 0;
		background: #f2f0e4;
		box-sizing: border-box;
		font-size: 5.1px;
		white-space: nowrap;
		overflow: hidden;
	}

	.tab.on {
		height: 9px;
		background: #f8f7f0;
		border-top: 2px solid #e8a030;
		line-height: 6px;
	}

	.t0 {
		width: 40px;
	}

	.t1 {
		width: 20px;
	}

	.t2 {
		width: 39px;
	}

	.t3 {
		width: 61px;
	}

	.t4 {
		width: 58px;
	}

	.t5 {
		width: 30px;
	}

	.panel {
		height: 199px;
		width: 273px;
		background: #f7f6ef;
		border: 1px solid #b9b7a6;
		box-sizing: border-box;
		display: grid;
		grid-template-columns: 127px 137px;
		column-gap: 5px;
		padding: 7px 0 0 1px;
		flex: none;
	}

	.pcol {
		display: flex;
		flex-direction: column;
		gap: 5px;
	}

	.pcol:last-child {
		gap: 4px;
	}

	.g1 {
		height: 88px;
		padding: 8px 3px 0 4px;
		background: #f7f6ef;
	}

	.g2 {
		height: 84px;
		padding: 7px 3px 0 4px;
		background: #f7f6ef;
	}

	.g3 {
		height: 62px;
		padding: 6px 2px 0 3px;
		background: #f7f6ef;
	}

	.g4 {
		height: 17px;
		padding: 3px 2px 0 3px;
		background: #f7f6ef;
	}

	.frow {
		display: flex;
		align-items: center;
		height: 14px;
		white-space: nowrap;
	}

	.g1 .mt {
		margin-top: 4px;
	}

	.g2 .mt1 {
		margin-top: 1.5px;
	}

	.frow.tall {
		height: 16px;
	}

	.flbl {
		flex: 1;
	}

	.typ {
		width: 14px;
		flex: none;
	}

	.roz {
		margin-left: 2px;
		width: 24px;
		flex: none;
		letter-spacing: -0.1px;
	}

	.omit {
		width: 29px;
		flex: none;
	}

	.clbl {
		width: 33px;
		white-space: normal;
		line-height: 6px;
		margin: 0 6px 0 2px;
		flex: none;
		font-size: 5.2px;
	}

	.tall .chk {
		margin-top: 0;
	}

	.spin {
		display: flex;
		width: 42px;
		height: 12px;
		flex: none;
	}

	.sval {
		flex: 1;
		background: #fff;
		border: 1px solid #7f9db9;
		box-sizing: border-box;
		padding-left: 2px;
		line-height: 10px;
	}

	.off .sval {
		background: #f1efe3;
		color: #aaa;
		border-color: #c8c6b6;
	}

	.sarr {
		width: 9px;
		display: flex;
		flex-direction: column;
		gap: 1px;
		flex: none;
	}

	.sarr svg {
		display: block;
		flex: 1;
		min-height: 0;
		width: 9px;
		background: #c6d5f6;
		border-radius: 1px;
	}

	.off .sarr svg {
		background: #e4e2d4;
		opacity: 0.6;
	}

	.g4 .spin {
		height: 11px;
	}

	.lmark2 {
		width: 3px;
		height: 1px;
		background: #333;
		margin: 0 4px 0 1px;
		flex: none;
	}

	.arrow {
		width: 6px;
		height: 5px;
		background: linear-gradient(90deg, #111 60%, #555);
		margin-right: 2px;
		flex: none;
	}

	.d3-foot {
		display: flex;
		gap: 12px;
		padding-left: 131px;
		margin-top: 6px;
	}

	:global(.fsel) {
		width: 65px;
	}

	:global(.asel) {
		width: 99px;
	}

	:global(.tsel) {
		width: 40px;
		margin-left: 8px;
	}

	:global(.d2-sel) {
		flex: 1 !important;
		height: 10.5px;
	}
</style>
